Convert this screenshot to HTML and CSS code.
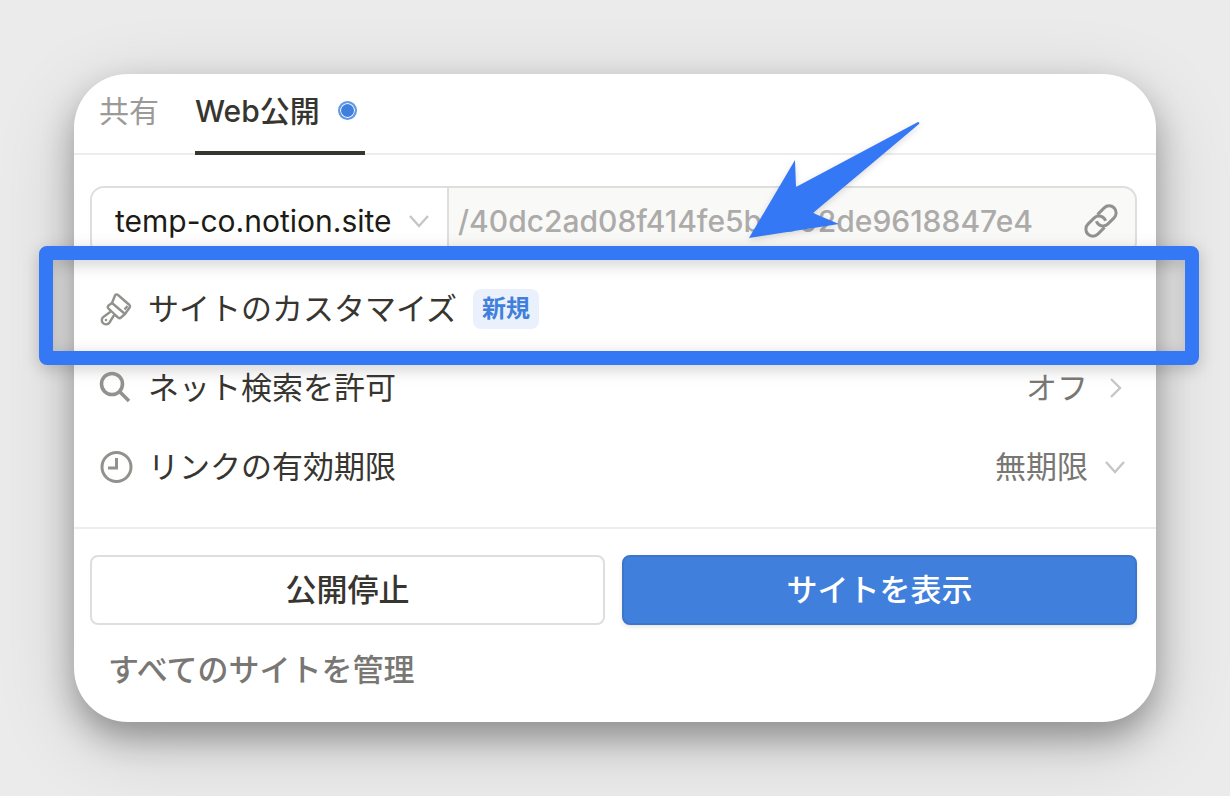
FILE: index.html
```html
<!DOCTYPE html>
<html lang="ja">

<head>
  <meta charset="UTF-8">
  <meta name="viewport" content="width=device-width, initial-scale=1">
  <title>Web公開</title>
  <link rel="stylesheet" href="styles.css">
</head>

<body>
  <main class="panel">
    <div class="tabs" role="tablist">
      <button class="tab" role="tab" aria-selected="false">共有</button>
      <button class="tab active" role="tab" aria-selected="true">Web公開<span class="dot"></span></button>
    </div>

    <div class="address">
      <div class="domain">
        <select class="domain-select" aria-label="ドメイン">
          <option>temp-co.notion.site</option>
        </select>
        <svg class="chevron" viewBox="0 0 22 22"><path d="M2 6l9 10 9-10" /></svg>
      </div>
      <input class="path" type="text" aria-label="パス" value="/40dc2ad08f414fe5b8c02de9618847e4" readonly>
      <button class="copy" aria-label="リンクをコピー">
        <svg class="link-icon" viewBox="0 0 34 34">
          <g transform="rotate(-45 17 17)">
            <path d="M15 24H5.500a7 7 0 0 1 0-14h9a7 7 0 0 1 6 10" />
            <path d="M19 10h9.500a7 7 0 0 1 0 14h-9a7 7 0 0 1-6-10" />
          </g>
        </svg>
      </button>
      <svg class="arrow" viewBox="0 0 172 118"><path d="M1 117L47 39l1 27L170 1q2 0 1 2L65 92l26 11z" /></svg>
    </div>

    <div class="rows">
      <div class="row">
        <button class="row-button">
          <svg class="icon brush" viewBox="0 0 32 32">
            <path d="M12 10l3-7.500q1-2 3-.5l11.500 10q1 1 .3 2.300L25 21" />
            <path d="M12 10l-3.500 2.500q-1.500 1.500 0 3L18 24.500q2 1.500 3.500-.5L25 21zM27.500 13l-3 3.500" />
            <path d="M9.500 16.500q2 2 0 3L4 23.500a4.200 4.200 0 1 0 5.500 6l4-6.500q1-1.500 3.500.5" />
            <circle class="fill" cx="6" cy="27" r="1.300" />
          </svg>
          <span class="label">サイトのカスタマイズ</span>
          <span class="badge">新規</span>
        </button>
        <div class="frame"></div>
      </div>
      <div class="row">
        <button class="row-button">
          <svg class="icon thick" viewBox="0 0 32 32">
            <circle cx="12" cy="12" r="10.500" />
            <path d="M20 20l9 9" />
          </svg>
          <span class="label">ネット検索を許可</span>
          <span class="value">オフ</span>
          <svg class="chevron" viewBox="0 0 22 22"><path d="M7 2l9 9-9 9" /></svg>
        </button>
      </div>
      <div class="row">
        <svg class="icon" viewBox="0 0 32 32">
          <circle cx="16.500" cy="16" r="14.500" />
          <path d="M16.500 7v10H8" />
        </svg>
        <label class="label" for="expiry">リンクの有効期限</label>
        <select class="value" id="expiry">
          <option>無期限</option>
        </select>
        <svg class="chevron" viewBox="0 0 22 22"><path d="M2 6l9 10 9-10" /></svg>
      </div>
    </div>

    <div class="footer">
      <div class="buttons">
        <button class="button">公開停止</button>
        <button class="button primary">サイトを表示</button>
      </div>
      <a class="manage" href="#">すべてのサイトを管理</a>
    </div>
  </main>
</body>

</html>
```

FILE: styles.css
```css
* {
  box-sizing: border-box;
}

body {
  margin: 0;
  padding: 74px;
  background: #ebebeb;
  color: #37352f;
  font-family: Inter, "Noto Sans CJK JP", sans-serif;
  font-size: 31px;
  line-height: 40px;
}

button,
select,
input {
  margin: 0;
  padding: 0;
  border: none;
  outline: none;
  border-radius: 0;
  background: none;
  color: inherit;
  font: inherit;
  appearance: none;
}

button,
select {
  cursor: pointer;
}

svg {
  flex: none;
  overflow: visible;
  fill: none;
  stroke: #91918e;
  stroke-width: 3;
}

.panel {
  border-radius: 54px;
  background: #fff;
  box-shadow: 0 16px 32px rgba(0, 0, 0, .3), 0 20px 80px rgba(0, 0, 0, .16);
}

.tabs {
  display: flex;
  gap: 36px;
  padding: 0 25px;
  border-bottom: 2px solid #ededec;
}

.tab {
  display: flex;
  align-items: center;
  height: 81px;
  margin-bottom: -2px;
  padding-bottom: 4px;
  border-bottom: 4px solid transparent;
  color: #9b9a97;
  font-size: 30px;
}

.tab.active {
  border-color: #37352f;
  color: #37352f;
  font-weight: 500;
}

.dot {
  width: 19px;
  height: 19px;
  margin: 0 8px 0 18px;
  border: 2px solid #6199e3;
  border-radius: 50%;
  background: #4080dc;
  box-shadow: inset 0 0 0 1px #fff;
}

/* address bar */
.address {
  position: relative;
  display: flex;
  height: 70px;
  margin: 31px 19px 0 16px;
  border: 2px solid #dededc;
  border-radius: 14px;
  background: #f9f9f8;
}

.domain {
  display: flex;
  align-items: center;
  gap: 16px;
  padding: 0 17px 0 23px;
  border-right: 2px solid #dededc;
  border-radius: 12px 0 0 12px;
  background: #fff;
}

.domain-select {
  color: #1d1b16;
  font-size: 30px;
}

.path {
  flex: 1;
  min-width: 0;
  padding-left: 9px;
  color: #acaba9;
  font-size: 30px;
  font-weight: 500;
}

.copy {
  padding: 0 17px;
}

.link-icon {
  display: block;
  width: 34px;
  height: 34px;
}

.chevron {
  width: 22px;
  height: 22px;
  stroke: #c7c6c4;
  stroke-width: 2.4;
}

.arrow {
  position: absolute;
  top: -67px;
  left: 656px;
  width: 172px;
  height: 118px;
  fill: #3478f6;
  stroke: none;
  filter: drop-shadow(0 2px 3px rgba(0, 0, 0, .15));
}

/* setting rows */
.rows {
  padding: 13px 0 21px;
}

.row {
  position: relative;
  display: flex;
  align-items: center;
  height: 79px;
  padding: 0 30px 0 26px;
}

.row-button {
  display: flex;
  flex: 1;
  align-items: center;
  text-align: left;
}

.icon {
  width: 32px;
  height: 32px;
  margin-right: 16px;
}

.brush {
  stroke-width: 2.4;
  stroke-linejoin: round;
}

.thick {
  stroke-width: 3.6;
}

.fill {
  fill: #91918e;
  stroke: none;
}

.value {
  margin: 0 16px 0 auto;
  color: #787774;
}

.badge {
  margin-left: 16px;
  padding: 0 9px;
  border-radius: 8px;
  background: #eaf1fc;
  color: #4080dc;
  font-size: 24px;
  font-weight: 600;
}

/* highlight around the first row */
.frame {
  position: absolute;
  inset: -23px -43px -17px -35px;
  border: 14px solid #3478f6;
  border-radius: 8px;
  filter: drop-shadow(0 4px 8px rgba(0, 0, 0, .2));
  pointer-events: none;
}

.footer {
  padding: 26px 19px 32px 16px;
  border-top: 2px solid #ededec;
}

.buttons {
  display: grid;
  grid-template-columns: 1fr 1fr;
  gap: 17px;
}

.button {
  height: 70px;
  border: 2px solid #dededc;
  border-radius: 8px;
  font-weight: 500;
}

.primary {
  border-color: #3b76cb;
  background: #4080dc;
  box-shadow: 0 2px 4px rgba(0, 0, 0, .1);
  color: #fff;
}

.manage {
  display: inline-block;
  margin: 25px 0 0 18px;
  color: #787774;
  font-weight: 500;
  text-decoration: none;
}
```
